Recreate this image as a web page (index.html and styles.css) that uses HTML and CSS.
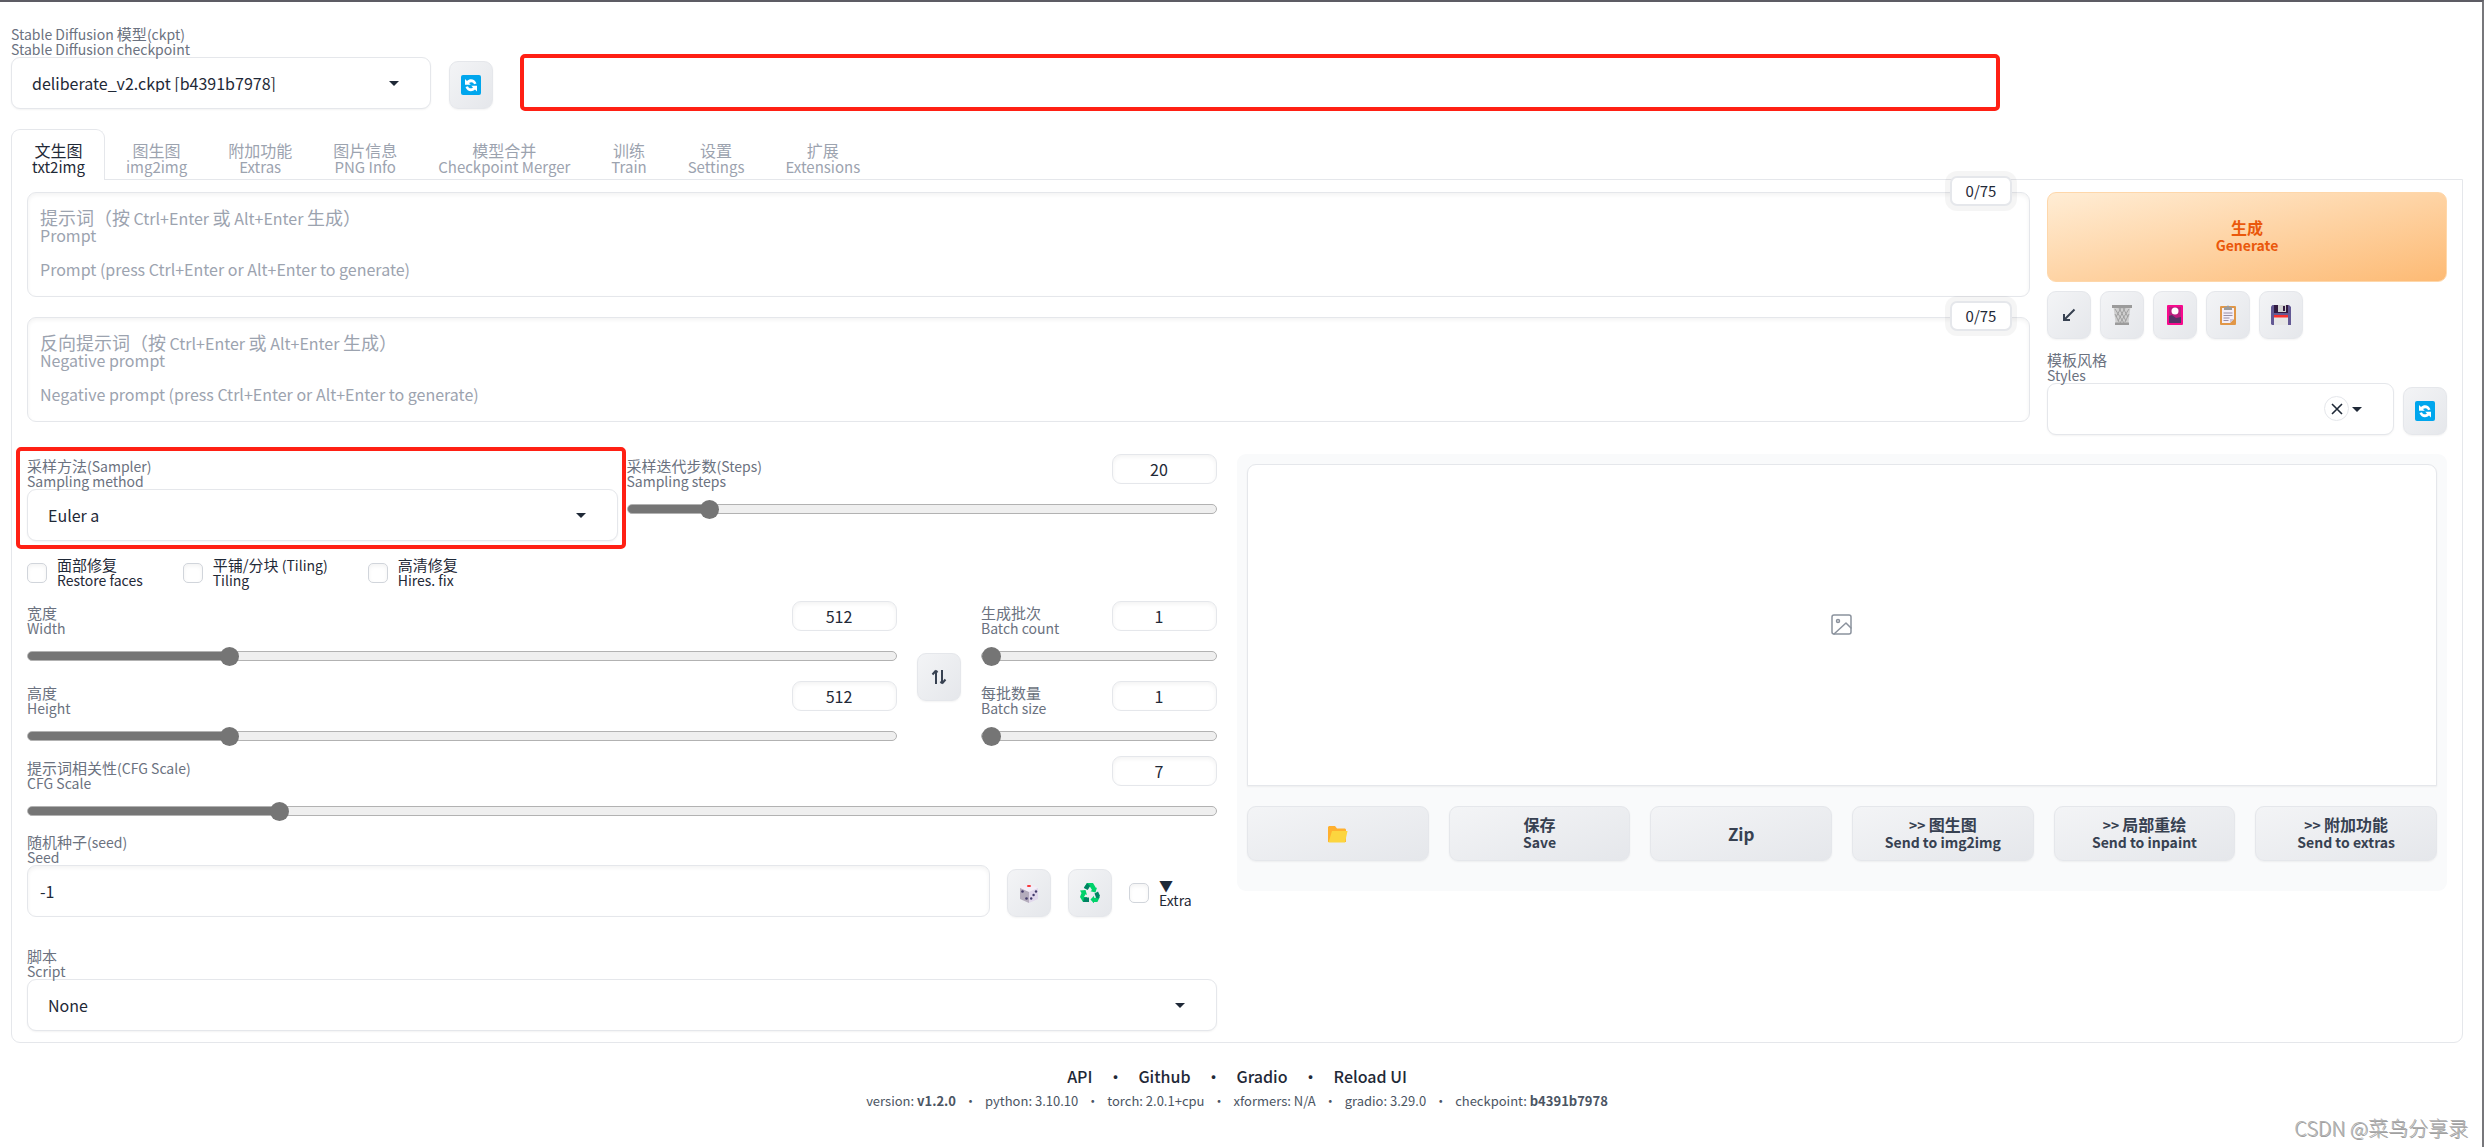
FILE: index.html
```html
<!DOCTYPE html>
<html lang="zh-CN">
<head>
<meta charset="utf-8">
<title>Stable Diffusion</title>
<link rel="stylesheet" href="styles.css">
</head>
<body>
<svg class="sprite" aria-hidden="true">
  <symbol id="caret" viewBox="0 0 10 5"><path d="M0 0h10L5 5z" fill="#1f2937"/></symbol>
  <symbol id="refresh" viewBox="0 0 20 20">
    <rect width="20" height="20" rx="2" fill="#00a6ed"/>
    <path d="M4 4l2 2c3-3 8-2 9.500 2.500l-2.500.8C12.500 7 10 6.500 8 8l1.800 1.800H4z" fill="#fff"/>
    <path d="M16 16.500l-2-2c-3 3-8 2-9.500-2.500l2.500-.8c.7 2.300 3 2.800 5 1.300L10.200 10.800H16z" fill="#fff"/>
  </symbol>
</svg>

<div class="app">
  <header class="quick">
    <div class="field checkpoint">
      <label class="label" for="ckpt">Stable Diffusion <span class="zh">模型</span>(ckpt)<br>Stable Diffusion checkpoint</label>
      <div class="select"><select id="ckpt"><option>deliberate_v2.ckpt [b4391b7978]</option></select><svg class="caret"><use href="#caret"/></svg></div>
    </div>
    <button class="tool" aria-label="Refresh"><svg class="icon"><use href="#refresh"/></svg></button>
    <div class="mark mark-top"></div>
  </header>

  <nav class="tabs">
    <button class="tab active"><span class="zh">文生图</span><br>txt2img</button>
    <button class="tab"><span class="zh">图生图</span><br>img2img</button>
    <button class="tab"><span class="zh">附加功能</span><br>Extras</button>
    <button class="tab"><span class="zh">图片信息</span><br>PNG Info</button>
    <button class="tab"><span class="zh">模型合并</span><br>Checkpoint Merger</button>
    <button class="tab"><span class="zh">训练</span><br>Train</button>
    <button class="tab"><span class="zh">设置</span><br>Settings</button>
    <button class="tab"><span class="zh">扩展</span><br>Extensions</button>
  </nav>

  <main class="panel">
    <section class="top">
      <div class="prompts">
        <div class="prompt">
          <textarea id="prompt"></textarea>
          <label class="hint" for="prompt"><span class="zh">提示词（按</span> Ctrl+Enter <span class="zh">或</span> Alt+Enter <span class="zh">生成）</span><br>Prompt<br><br>Prompt (press Ctrl+Enter or Alt+Enter to generate)</label>
          <span class="counter">0/75</span>
        </div>
        <div class="prompt">
          <textarea id="negative"></textarea>
          <label class="hint" for="negative"><span class="zh">反向提示词（按</span> Ctrl+Enter <span class="zh">或</span> Alt+Enter <span class="zh">生成）</span><br>Negative prompt<br><br>Negative prompt (press Ctrl+Enter or Alt+Enter to generate)</label>
          <span class="counter">0/75</span>
        </div>
      </div>
      <div class="actions">
        <button class="generate"><span class="zh">生成</span><br>Generate</button>
        <div class="tools">
          <button class="tool" aria-label="Read parameters"><svg class="icon" viewBox="0 0 20 20"><path d="M15.500 4.500L5.500 14.500M5 9v6h6" fill="none" stroke="#374151" stroke-width="2"/></svg></button>
          <button class="tool" aria-label="Clear prompt"><svg class="icon" viewBox="0 0 20 20"><path d="M1.500 2h17l-2.200 17H3.700z" fill="#cfcfcf"/><path d="M3 4l9 14M7 3l7 13M11 3l5 9M17 4L8 18M13 3L6 16M9 3l-5 9M3 9l4 8M17 9l-4 8" stroke="#9b9b9b" stroke-width=".9"/><path d="M0 0h20v3H0zM3 17.500h14V20H3z" fill="#9b9b9b"/></svg></button>
          <button class="tool" aria-label="Extra networks"><svg class="icon" viewBox="0 0 20 20"><rect x="2" width="16" height="20" rx="1" fill="#f70a8d"/><path d="M4 2h12v16H4z" fill="#bb1d80"/><path d="M4 11l3-1 4 3 5-1v6H4z" fill="#533566"/><circle cx="10" cy="6" r="3.500" fill="#fff"/></svg></button>
          <button class="tool" aria-label="Apply styles"><svg class="icon" viewBox="0 0 20 20"><rect x="2" y="1" width="16" height="19" rx="1" fill="#e19747"/><path d="M4 3h12v11l-4 4H4z" fill="#f3eef8"/><path d="M16 14l-4 4v-4z" fill="#cdc4d6"/><path d="M5.500 8h9M5.500 10.500h9M5.500 13h6M5.500 15.500h5" stroke="#998ea4"/><path d="M6 2h2.500a1.500 1.500 0 013 0H14v3H6z" fill="#9b9b9b"/></svg></button>
          <button class="tool" aria-label="Save style"><svg class="icon" viewBox="0 0 20 20"><path d="M0 1.500L1.500 0H18l2 2v18H1l-1-1z" fill="#635994"/><path d="M3 0h14v8H3z" fill="#321b41"/><path d="M7 0h8v7H7z" fill="#d3d3d3"/><path d="M12 1h2v5h-2z" fill="#321b41"/><path d="M3 10h14v10H3z" fill="#e6e6e6"/><path d="M3 10h14v2.500H3z" fill="#f8312f"/></svg></button>
        </div>
        <div class="styles-row">
          <div class="field grow">
            <label class="label" for="styles"><span class="zh">模板风格</span><br>Styles</label>
            <div class="select"><select id="styles"><option></option></select><button class="clear" aria-label="Clear"><svg viewBox="0 0 12 12"><path d="M1 1l10 10M11 1L1 11" stroke="#1f2937" stroke-width="1.600"/></svg></button><svg class="caret"><use href="#caret"/></svg></div>
          </div>
          <button class="tool" aria-label="Refresh styles"><svg class="icon"><use href="#refresh"/></svg></button>
        </div>
      </div>
    </section>

    <section class="columns">
      <div class="settings">
        <div class="pair">
          <div class="field sampler">
            <label class="label" for="sampler"><span class="zh">采样方法</span>(Sampler)<br>Sampling method</label>
            <div class="select"><select id="sampler"><option>Euler a</option></select><svg class="caret"><use href="#caret"/></svg></div>
            <div class="mark mark-sampler"></div>
          </div>
          <div class="slider">
            <div class="slider-head"><label class="label" for="steps"><span class="zh">采样迭代步数</span>(Steps)<br>Sampling steps</label><input class="number" type="text" value="20" aria-label="Steps"></div>
            <input id="steps" type="range" min="1" max="150" value="20" style="--p:12.8%">
          </div>
        </div>
        <div class="checks">
          <label class="check"><input type="checkbox"><span><span class="zh">面部修复</span><br>Restore faces</span></label>
          <label class="check"><input type="checkbox"><span><span class="zh">平铺/分块</span> (Tiling)<br>Tiling</span></label>
          <label class="check"><input type="checkbox"><span><span class="zh">高清修复</span><br>Hires. fix</span></label>
        </div>
        <div class="dims">
          <div class="stack">
            <div class="slider">
              <div class="slider-head"><label class="label" for="width"><span class="zh">宽度</span><br>Width</label><input class="number" type="text" value="512" aria-label="Width"></div>
              <input id="width" type="range" min="64" max="2048" value="512" style="--p:22.6%">
            </div>
            <div class="slider">
              <div class="slider-head"><label class="label" for="height"><span class="zh">高度</span><br>Height</label><input class="number" type="text" value="512" aria-label="Height"></div>
              <input id="height" type="range" min="64" max="2048" value="512" style="--p:22.6%">
            </div>
          </div>
          <button class="tool" aria-label="Swap"><svg class="icon" viewBox="0 0 20 20"><path d="M7 17V4M3.500 7.500L7 3.500M13 3v13M16.500 12.500L13 16.500M7 3.500l1.500 2M13 16.500l-1.500-2" fill="none" stroke="#374151" stroke-width="2"/></svg></button>
          <div class="stack batch">
            <div class="slider">
              <div class="slider-head"><label class="label" for="count"><span class="zh">生成批次</span><br>Batch count</label><input class="number" type="text" value="1" aria-label="Batch count"></div>
              <input id="count" type="range" min="1" max="100" value="1" style="--p:0%">
            </div>
            <div class="slider">
              <div class="slider-head"><label class="label" for="size"><span class="zh">每批数量</span><br>Batch size</label><input class="number" type="text" value="1" aria-label="Batch size"></div>
              <input id="size" type="range" min="1" max="8" value="1" style="--p:0%">
            </div>
          </div>
        </div>
        <div class="slider cfg">
          <div class="slider-head"><label class="label" for="cfg"><span class="zh">提示词相关性</span>(CFG Scale)<br>CFG Scale</label><input class="number" type="text" value="7" aria-label="CFG Scale"></div>
          <input id="cfg" type="range" min="1" max="30" step="0.5" value="7" style="--p:20.7%">
        </div>
        <div class="seed">
          <div class="field grow">
            <label class="label" for="seed"><span class="zh">随机种子</span>(seed)<br>Seed</label>
            <input id="seed" class="text" type="text" value="-1">
          </div>
          <button class="tool" aria-label="Random seed"><svg class="icon" viewBox="0 0 20 20"><path d="M10 1l9 4-9 4-9-4z" fill="#f3eef8"/><path d="M1 5l9 4v11l-9-4z" fill="#b4acbc"/><path d="M19 5l-9 4v11l9-4z" fill="#e1d8ec"/><ellipse cx="10" cy="3" rx="2.200" ry="1.100" fill="#f8312f"/><g fill="#433b6b"><circle cx="3.500" cy="8.500" r="1.300"/><circle cx="7.500" cy="15.500" r="1.300"/><circle cx="17" cy="8.500" r="1.200"/><circle cx="14.600" cy="12" r="1.200"/><circle cx="12.200" cy="15.500" r="1.200"/></g></svg></button>
          <button class="tool" aria-label="Reuse seed"><svg class="icon" viewBox="0 0 20 20"><path d="M7 0h6l3 5 1-.6-1.500 5-5-1.200L12 7 9.500 3 7.800 6 4 4.500z" fill="#00d26a"/><path d="M7 0l3.200 3-2.500 4L3.800 5z" fill="#008463"/><path d="M1.500 10L0 7.500l5.500-.6L7 12l-1.400-.8L4 14h3v5H3L0 14z" fill="#00d26a"/><path d="M4 14.500h5V19H3z" fill="#008463"/><path d="M10.500 16.500L14 12.800v2h3l3-1-2.600 5.200H14v1.500z" fill="#00d26a"/><path d="M14.500 10.500L18 8.500l2 4.200-1.500 2.800-2.300-.6z" fill="#008463"/></svg></button>
          <label class="check extra"><input type="checkbox"><span>▼<br>Extra</span></label>
        </div>
        <div class="field script">
          <label class="label" for="script"><span class="zh">脚本</span><br>Script</label>
          <div class="select"><select id="script"><option>None</option></select><svg class="caret"><use href="#caret"/></svg></div>
        </div>
      </div>

      <div class="output">
        <div class="gallery"><svg viewBox="0 0 24 24" fill="none" stroke="#8b929d" stroke-width="1.500" stroke-linecap="round" stroke-linejoin="round"><rect x="2" y="2" width="19" height="19" rx="2"/><circle cx="8" cy="8" r="1.500"/><path d="M21 15l-5-5L4 21"/></svg></div>
        <div class="outputs">
          <button class="wide" aria-label="Open folder"><svg class="icon" viewBox="0 0 20 20"><path d="M0 3l1-1h6l2 2.500h8l1 1V18H0z" fill="#ffb02e"/><path d="M4 7h15.500L17 18.500H.500z" fill="#fcd53f"/></svg></button>
          <button class="wide"><span class="zh">保存</span><br>Save</button>
          <button class="wide zip">Zip</button>
          <button class="wide">&gt;&gt; <span class="zh">图生图</span><br>Send to img2img</button>
          <button class="wide">&gt;&gt; <span class="zh">局部重绘</span><br>Send to inpaint</button>
          <button class="wide">&gt;&gt; <span class="zh">附加功能</span><br>Send to extras</button>
        </div>
      </div>
    </section>
  </main>

  <footer class="footer">
    <div class="links"><a href="#">API</a><span>•</span><a href="#">Github</a><span>•</span><a href="#">Gradio</a><span>•</span><a href="#">Reload UI</a></div>
    <div class="versions"><span>version: <b>v1.2.0</b></span><span>•</span><span>python: 3.10.10</span><span>•</span><span>torch: 2.0.1+cpu</span><span>•</span><span>xformers: N/A</span><span>•</span><span>gradio: 3.29.0</span><span>•</span><span>checkpoint: <b>b4391b7978</b></span></div>
  </footer>
</div>
<div class="watermark">CSDN @菜鸟分享录</div>
</body>
</html>
```
FILE: styles.css
```css
* { box-sizing: border-box; }

body {
  margin: 0;
  min-height: 100vh;
  position: relative;
  border-top: 2px solid #5d5c64;
  border-right: 2px solid #77777b;
  background: #fff;
  color: #1f2937;
  font: 16px/18px "Noto Sans CJK SC", sans-serif;
}

button, input, select, textarea { font: inherit; color: inherit; margin: 0; }
button { cursor: pointer; padding: 0; }
.sprite { position: absolute; width: 0; height: 0; }
.app { padding: 25px 19px 0 11px; }
.grow { flex: 1; }

/* labels and fields */
.zh { font-size: 15px; line-height: 1px; }
.label { display: block; font-size: 14px; line-height: 15px; color: #6b7280; white-space: nowrap; }
.field .label { position: relative; z-index: 1; }

.select { position: relative; }
.select select {
  display: block;
  width: 100%;
  height: 52px;
  padding: 0 20px;
  appearance: none;
  border: 1px solid #e5e7eb;
  border-radius: 9px;
  background: #fff;
  box-shadow: 0 1px 2px rgba(0, 0, 0, .05);
}
.caret { position: absolute; right: 32px; top: 24px; width: 10px; height: 5px; pointer-events: none; }
.clear {
  position: absolute;
  right: 45px;
  top: 13px;
  width: 25px;
  height: 25px;
  display: grid;
  place-items: center;
  border: 1px solid #e5e7eb;
  border-radius: 50%;
  background: #fff;
}
.clear svg { width: 12px; height: 12px; }

.text {
  display: block;
  width: 100%;
  height: 52px;
  padding: 0 12px;
  border: 1px solid #e5e7eb;
  border-radius: 9px;
  box-shadow: inset 0 2px 4px rgba(0, 0, 0, .05);
}

.tool, .wide {
  display: grid;
  place-items: center;
  border: 1px solid #e5e7eb;
  border-radius: 9px;
  background: linear-gradient(to bottom right, #f3f4f6, #e5e7eb);
  box-shadow: 0 1px 2px rgba(0, 0, 0, .05);
}
.tool { width: 44px; height: 48px; flex: none; }
.icon { width: 20px; height: 20px; display: block; }

/* header */
.quick { display: flex; align-items: flex-end; gap: 18px; }
.checkpoint { width: 420px; }
.mark { border: 4px solid #ff2014; border-radius: 5px; }
.mark-top { width: 1480px; height: 57px; margin: 0 0 -2px 9px; }

/* tabs */
.tabs { display: flex; margin-top: 20px; position: relative; z-index: 1; }
.tab {
  height: 51px;
  padding: 7px 19px 0 20px;
  border: 1px solid transparent;
  border-bottom: 0;
  border-radius: 9px 9px 0 0;
  background: none;
  color: #9ca3af;
  font-size: 15px;
  line-height: 16px;
}
.tab .zh { font-size: 16px; }
.tab.active { background: #fff; border-color: #e5e7eb; color: #1f2937; }

.panel {
  margin-top: -1px;
  padding: 12px 15px 11px;
  border: 1px solid #e5e7eb;
  border-radius: 0 0 9px 9px;
}

/* prompts */
.top { display: flex; gap: 17px; }
.prompts { flex: 1; display: grid; gap: 20px; align-content: start; }
.prompt { position: relative; height: 105px; }
.prompt textarea {
  display: block;
  width: 100%;
  height: 105px;
  padding: 12px;
  resize: none;
  border: 1px solid #e5e7eb;
  border-radius: 9px;
  box-shadow: inset 0 2px 4px rgba(0, 0, 0, .05);
}
.hint { position: absolute; left: 13px; top: 18px; line-height: 17px; color: #9ca3af; pointer-events: none; }
.hint .zh { font-size: 18px; }
.counter {
  position: absolute;
  right: 18px;
  top: -16px;
  width: 62px;
  height: 30px;
  border: 2px solid #e5e7eb;
  border-radius: 7px;
  background: #fff;
  box-shadow: 0 0 0 5px rgba(0, 0, 0, .04);
  font-size: 15px;
  line-height: 26px;
  text-align: center;
}

.actions { width: 400px; }
.generate {
  width: 100%;
  height: 90px;
  border: 1px solid #fed7aa;
  border-radius: 9px;
  background: linear-gradient(to bottom right, #ffedd5, #fdba74);
  color: #ea580c;
  font-size: 14px;
  font-weight: 600;
  line-height: 17px;
}
.generate .zh, .wide .zh { font-size: 16px; }
.tools { display: flex; gap: 9px; margin: 9px 0 14px; }
.styles-row { display: flex; align-items: flex-end; gap: 9px; }

/* settings */
.columns { display: grid; grid-template-columns: 119fr 121fr; align-items: start; gap: 20px; margin-top: 19px; }
.settings, .output { min-width: 0; }
.pair { display: grid; grid-template-columns: 1fr 1fr; gap: 9px; height: 88px; }
.sampler { position: relative; padding-top: 5px; }
.mark-sampler { position: absolute; left: -11px; right: -8px; top: -7px; height: 102px; pointer-events: none; z-index: 2; }

.slider { height: 80px; }
.slider-head { display: flex; justify-content: space-between; height: 50px; }
.slider-head .label { padding-top: 5px; }
.number {
  width: 105px;
  height: 30px;
  padding: 0 20px 0 9px;
  border: 1px solid #e5e7eb;
  border-radius: 9px;
  box-shadow: inset 0 2px 4px rgba(0, 0, 0, .05);
  text-align: center;
}
input[type="range"] {
  appearance: none;
  display: block;
  width: 100%;
  height: 10px;
  border: 1px solid #b2b2b2;
  border-radius: 5px;
  background: linear-gradient(#757575, #757575) 0 / var(--p) 100% no-repeat border-box, #efefef;
}
input[type="range"]::-webkit-slider-thumb {
  appearance: none;
  width: 19px;
  height: 19px;
  border-radius: 50%;
  background: #757575;
}

.checks { display: flex; gap: 40px; margin: 16px 0 13px; }
.check { display: flex; align-items: center; gap: 10px; font-size: 14px; line-height: 15px; white-space: nowrap; }
.check input {
  appearance: none;
  width: 20px;
  height: 20px;
  border: 1px solid #d1d5db;
  border-radius: 5px;
  background: #fff;
  box-shadow: inset 0 2px 4px rgba(0, 0, 0, .05);
}
.dims { display: flex; gap: 20px; }
.dims .stack { flex: 1; }
.dims .batch { flex: none; width: 236px; }
.dims .tool { margin-top: 52px; }
.cfg { height: 75px; margin-top: -5px; }

.seed { display: flex; align-items: flex-end; gap: 17px; padding-top: 4px; }
.extra { height: 48px; width: 88px; }
.script { margin-top: 32px; }

/* output */
.output { padding: 10px 10px 30px; border-radius: 9px; background: #f9fafb; }
.gallery {
  height: 322px;
  display: grid;
  place-items: center;
  border: 1px solid #e5e7eb;
  border-radius: 9px 9px 0 0;
  background: #fff;
  box-shadow: 0 1px 2px rgba(0, 0, 0, .05);
}
.gallery svg { width: 24px; height: 24px; }
.outputs { display: grid; grid-template-columns: repeat(6, 1fr); gap: 20px; margin-top: 20px; }
.wide { display: block; height: 55px; color: #374151; font-size: 14px; font-weight: 600; line-height: 17px; }
.wide .icon { margin: auto; }
.zip { font-size: 17px; }

/* footer */
.footer { padding-top: 24px; text-align: center; }
.links, .versions { display: flex; justify-content: center; }
.links { gap: 15px; font-weight: 500; }
.links a { color: #1f2937; text-decoration: none; }
.versions { gap: 8px; margin-top: 7px; font-size: 13px; color: #4b5563; }

.watermark {
  position: absolute;
  right: 14px;
  bottom: 7px;
  color: #b0b0b0;
  font-size: 20px;
  font-weight: 300;
  line-height: 24px;
  text-shadow: 1px 1px 0 #a0a0a0;
}
```
